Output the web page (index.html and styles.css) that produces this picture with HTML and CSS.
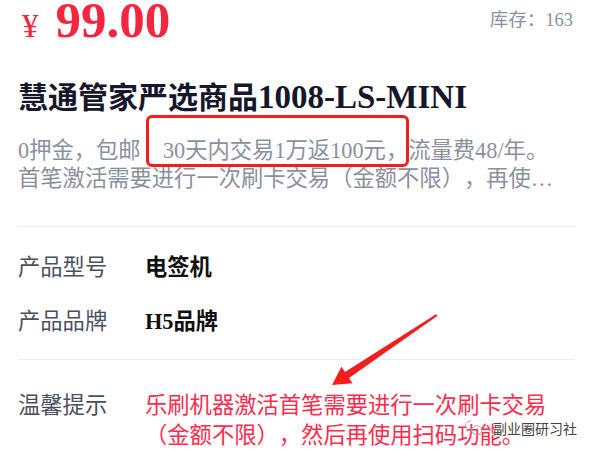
FILE: index.html
```html
<!DOCTYPE html>
<html lang="zh-CN">

<head>
    <meta charset="UTF-8">
    <meta name="viewport" content="width=device-width, initial-scale=1.0">
    <title>慧通管家严选商品</title>
    <link rel="stylesheet" href="styles.css">
</head>

<body>
    <div class="goods">
        <div class="price-row">
            <div class="price"><span class="yen">¥</span>99.00</div>
            <div class="stock">库存：163</div>
        </div>
        <h1 class="title">慧通管家严选商品<span class="model">1008-LS-MINI</span></h1>
        <p class="desc">0押金，包邮　30天内交易1万返100元，流量费48/年。<br>首笔激活需要进行一次刷卡交易（金额不限），再使用扫码功能，激活后即可正常使用。</p>

        <div class="specs">
            <div class="spec">
                <span class="spec-label">产品型号</span>
                <span class="spec-value">电签机</span>
            </div>
            <div class="spec">
                <span class="spec-label">产品品牌</span>
                <span class="spec-value">H5品牌</span>
            </div>
        </div>

        <div class="tips">
            <span class="spec-label">温馨提示</span>
            <span class="tips-text">乐刷机器激活首笔需要进行一次刷卡交易（金额不限），然后再使用扫码功能。</span>
        </div>

        <!-- annotations drawn over the screenshot -->
        <div class="mark-box"></div>
        <svg class="mark-arrow" width="595" height="454" viewBox="0 0 595 454">
            <polygon points="437.6,315.8 349,377.9 352.5,383.3 332,385 341.5,366.7 345,372.1 436,314.2" fill="#f21d1d" />
        </svg>
        <div class="watermark">
            <svg class="wm-icon" width="20" height="18" viewBox="0 0 22 20">
                <path d="M8 2C4.2 2 1.5 4.5 1.5 7.4c0 1.7.9 3.1 2.3 4.1l-.6 2 2.3-1.2c.8.2 1.6.4 2.5.4" fill="none" stroke="#a0a0a0" stroke-width="1" />
                <path d="M14 7.5c-3.300 0-5.9 2.2-5.9 4.8s2.6 4.8 5.9 4.8c.7 0 1.4-.1 2-.3l1.9 1-.5-1.7c1.5-.9 2.5-2.2 2.5-3.8 0-2.6-2.6-4.8-5.9-4.8z" fill="none" stroke="#a0a0a0" stroke-width="1" />
            </svg>
            <span>副业圈研习社</span>
        </div>
    </div>
</body>

</html>
```

FILE: styles.css
```css
body {
    margin: 0;
    background-color: #fff;
    font-family: "Liberation Serif", "Noto Sans CJK SC", serif;
    text-spacing-trim: space-all;
}

.goods {
    position: relative;
    width: 595px;
    height: 454px;
    padding: 0 20px 0 18px;
    box-sizing: border-box;
    overflow: hidden;
}

.price-row {
    display: flex;
    justify-content: space-between;
    align-items: flex-start;
    height: 40px;
}

.price {
    color: #f5253f;
    font-size: 51px;
    font-weight: bold;
    line-height: 40px;
    padding-left: 4px;
}

.price .yen {
    font-size: 33px;
    font-weight: normal;
    margin-right: 17px;
}

.stock {
    color: #8a91a2;
    font-size: 18.5px;
    line-height: 18px;
    padding-top: 11px;
    padding-right: 2px;
}

.title {
    margin: 37px 0 0;
    color: #16172b;
    font-size: 30px;
    line-height: 40px;
    font-weight: bold;
}

.title .model {
    font-size: 33px;
}

.desc {
    margin: 19px 3px 0 0;
    color: #8b909e;
    font-size: 22.3px;
    line-height: 28px;
    height: 56px;
    overflow: hidden;
    display: -webkit-box;
    -webkit-line-clamp: 2;
    -webkit-box-orient: vertical;
}

.specs {
    margin-top: 33px;
    padding: 26px 0 22px;
    border-top: 1px solid #e9eef4;
    border-bottom: 1px solid #e9eef4;
    display: flex;
    flex-direction: column;
    gap: 24px;
}

.spec,
.tips {
    display: flex;
    font-size: 22.3px;
    line-height: 30px;
}

.tips {
    padding-top: 31px;
}

.spec-label {
    flex: 0 0 127px;
    color: #4b505e;
}

.spec-value {
    color: #111;
    font-weight: bold;
}

.tips-text {
    flex: 1;
    color: #ff2b4d;
}

.mark-box {
    position: absolute;
    left: 146px;
    top: 115px;
    width: 257px;
    height: 46px;
    border: 3px solid #f21d1d;
    border-radius: 6px;
}

.mark-arrow {
    position: absolute;
    left: 0;
    top: 0;
}

.watermark {
    position: absolute;
    left: 464px;
    top: 418px;
    display: flex;
    align-items: center;
    gap: 9px;
    color: #444;
    font-family: "Noto Sans CJK SC", sans-serif;
    font-size: 14px;
    line-height: 20px;
    text-shadow: 0 0 2px #fff, 0 0 2px #fff;
}
```
